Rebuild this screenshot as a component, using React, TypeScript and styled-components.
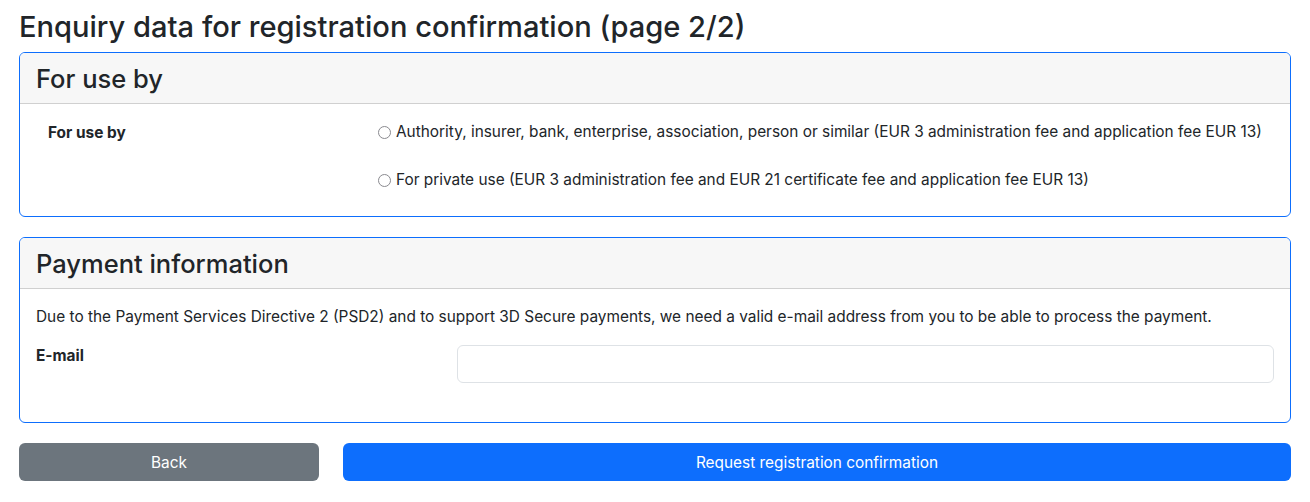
import React from "react";
import styled, { createGlobalStyle } from "styled-components";

const Global = createGlobalStyle`
  html, body { margin: 0; padding: 0; background: #fff; }
  body {
    font-family: Inter, "Liberation Sans", Arial, sans-serif;
    color: #212529;
    font-size: 15.4px;
  }
  * { box-sizing: border-box; }
`;

const Page = styled.div`
  padding: 8px 19px 20px 19px;
  width: 1310px;
`;

const Title = styled.h2`
  margin: 0 0 6px 0;
  font-size: 29.1px;
  font-weight: 500;
  line-height: 38px;
`;

const Card = styled.section`
  border: 1px solid #0d6efd;
  border-radius: 6px;
  margin-bottom: 20px;
  overflow: hidden;
`;

const CardHeader = styled.div`
  background: #f7f7f7;
  border-bottom: 1px solid #d0d0d0;
  height: 51px;
  padding: 0 16px;
  display: flex;
  align-items: center;
`;

const CardTitle = styled.h3`
  margin: 0;
  font-size: 25.5px;
  font-weight: 500;
`;

const CardBody = styled.div<{ $pad?: string }>`
  padding: ${(p) => p.$pad || "16px"};
`;

const FieldRow = styled.div<{ $labelWidth: number }>`
  display: grid;
  grid-template-columns: ${(p) => p.$labelWidth}px 1fr;
  align-items: start;
`;

const Label = styled.div<{ $indent?: number; $top?: number }>`
  font-weight: 700;
  padding-left: ${(p) => p.$indent || 0}px;
  padding-top: ${(p) => p.$top || 0}px;
  line-height: 20px;
`;

const Options = styled.div`
  display: flex;
  flex-direction: column;
  gap: 28px;
`;

const Option = styled.label`
  display: flex;
  align-items: center;
  gap: 5px;
  line-height: 20px;
`;

const Radio = styled.span`
  width: 13px;
  height: 13px;
  border-radius: 50%;
  border: 1px solid #8a8a8f;
  background: #fff;
  flex: none;
`;

const Text = styled.p`
  margin: 0 0 18px 0;
  line-height: 20px;
`;

const Input = styled.input`
  width: 100%;
  height: 38px;
  border: 1px solid #dee2e6;
  border-radius: 6px;
  outline: none;
  font: inherit;
  padding: 6px 12px;
`;

const Buttons = styled.div`
  display: flex;
  gap: 24px;
`;

const Button = styled.button<{ $variant: "secondary" | "primary"; $width?: number }>`
  height: 38px;
  border: none;
  border-radius: 6px;
  color: #fff;
  font: inherit;
  background: ${(p) => (p.$variant === "primary" ? "#0d6efd" : "#6c757d")};
  ${(p) => (p.$width ? `width: ${p.$width}px; flex: none;` : "flex: 1;")}
`;

export default function App() {
  return (
    <>
      <Global />
      <Page>
        <Title>Enquiry data for registration confirmation (page 2/2)</Title>
        <Card>
          <CardHeader>
            <CardTitle>For use by</CardTitle>
          </CardHeader>
          <CardBody $pad="18px 16px 26px 16px">
            <FieldRow $labelWidth={342}>
              <Label $indent={12} $top={1}>For use by</Label>
              <Options>
                <Option>
                  <Radio />
                  Authority, insurer, bank, enterprise, association, person or similar (EUR 3 administration fee and application fee EUR 13)
                </Option>
                <Option>
                  <Radio />
                  For private use (EUR 3 administration fee and EUR 21 certificate fee and application fee EUR 13)
                </Option>
              </Options>
            </FieldRow>
          </CardBody>
        </Card>
        <Card>
          <CardHeader>
            <CardTitle>Payment information</CardTitle>
          </CardHeader>
          <CardBody $pad="18px 16px 39px 16px">
            <Text>
              Due to the Payment Services Directive 2 (PSD2) and to support 3D Secure payments, we need a valid e-mail address from you to be able to process the payment.
            </Text>
            <FieldRow $labelWidth={421}>
              <Label $top={1}>E-mail</Label>
              <Input type="email" />
            </FieldRow>
          </CardBody>
        </Card>
        <Buttons>
          <Button $variant="secondary" $width={300}>Back</Button>
          <Button $variant="primary">Request registration confirmation</Button>
        </Buttons>
      </Page>
    </>
  );
}
